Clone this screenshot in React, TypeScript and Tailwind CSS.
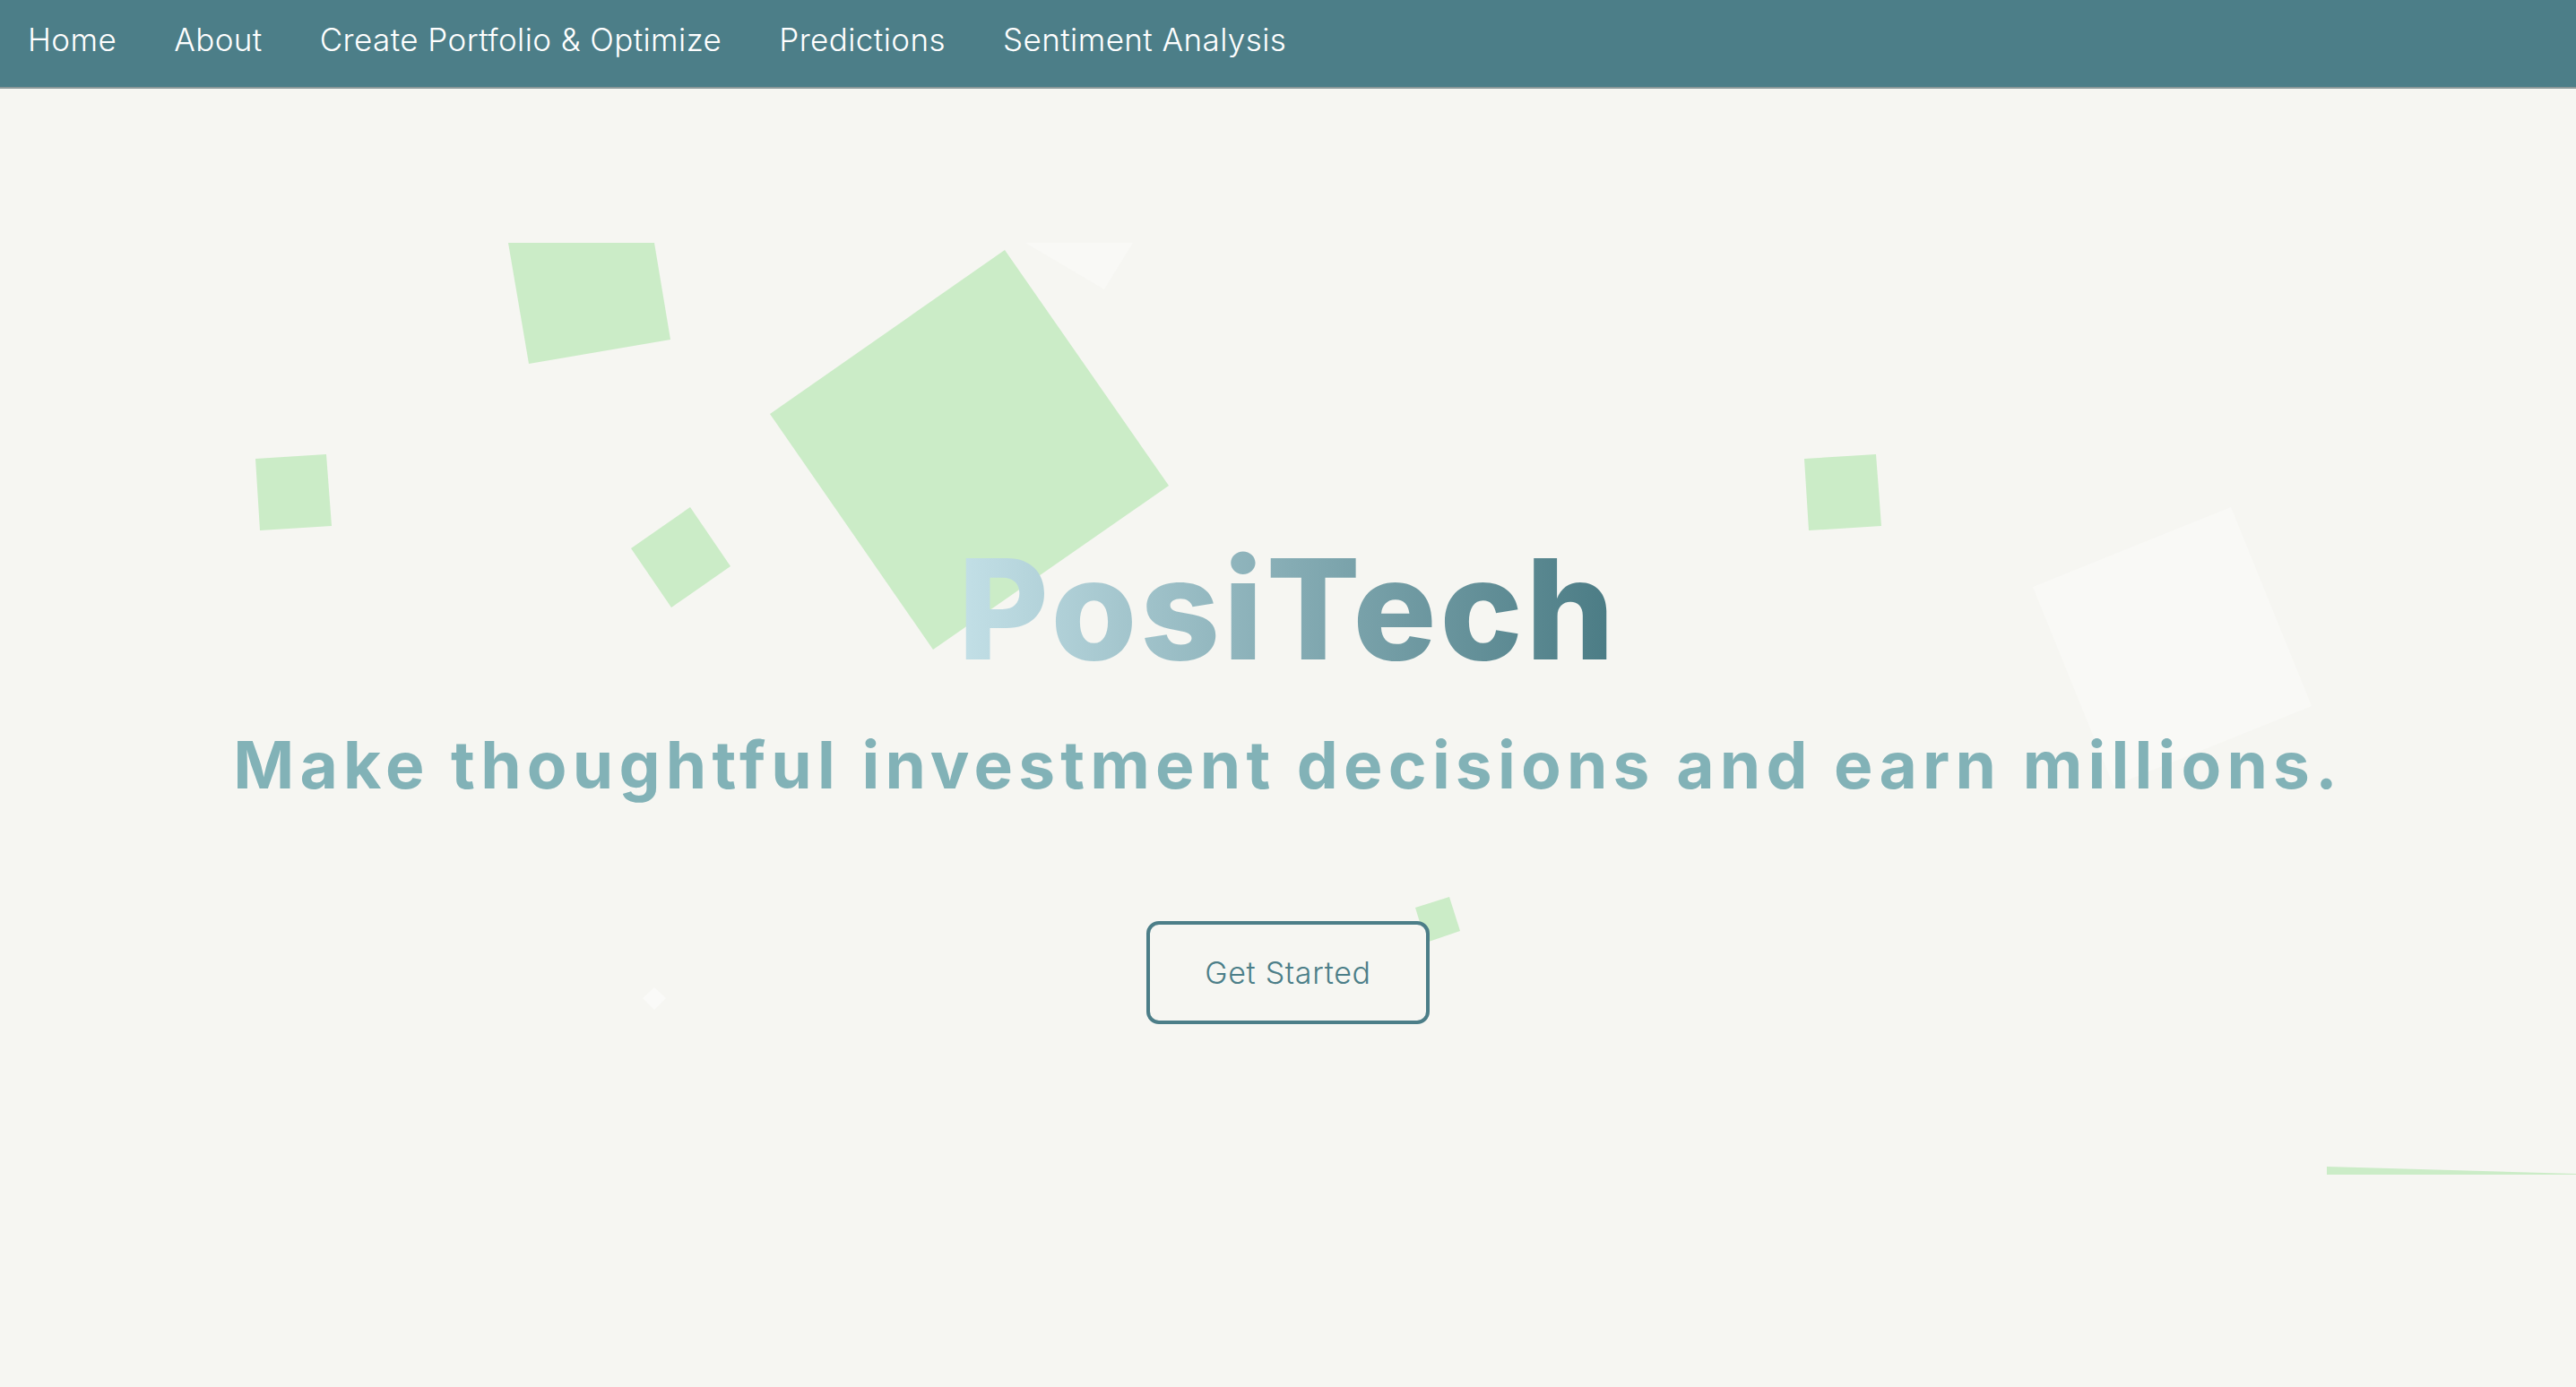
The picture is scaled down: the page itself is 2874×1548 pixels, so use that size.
import clsx from "clsx";

const links = ["Home", "About", "Create Portfolio & Optimize", "Predictions", "Sentiment Analysis"];

// background shapes, page coordinates
const shapes: Array<{ points: string; fill: string }> = [
  { points: "567,271 730,271 748,379 590,406", fill: "#cbecc7" },
  { points: "1121,279 1304,542 1041,725 859,462", fill: "#cbecc7" },
  { points: "285,512 364,507 370,587 290,592", fill: "#cbecc7" },
  { points: "770,566 815,632 749,678 704,612", fill: "#cbecc7" },
  { points: "2013,512 2093,507 2099,587 2018,592", fill: "#cbecc7" },
  { points: "1579,1013 1617,1001 1629,1039 1591,1052", fill: "#cbecc7" },
  { points: "2596,1302 2874,1310 2874,1311 2596,1311", fill: "#cbecc7" },
  { points: "1144,271 1264,271 1232,323", fill: "#f9f9f6" },
  { points: "2268,655 2489,566 2579,788 2358,877", fill: "#f9f9f6" },
  { points: "730,1102 743,1114 730,1127 717,1114", fill: "#fafaf8" },
];

function Shapes() {
  return (
    <svg className="absolute top-0 left-0 pointer-events-none" width={2874} height={1548} viewBox="0 0 2874 1548">
      {shapes.map((s, i) => (
        <polygon key={i} points={s.points} fill={s.fill} />
      ))}
    </svg>
  );
}

export default function App() {
  return (
    <div className="relative h-[1548px] w-full overflow-hidden bg-[#f6f6f2] font-['Inter',sans-serif]">
      <Shapes />
      <nav className="relative flex h-[99px] items-center border-b-2 border-[#8a9899] bg-[#4c7e88] pb-[8px]">
        {links.map((l, i) => (
          <a
            key={l}
            href="#"
            className={clsx("px-8 text-[35px] font-light tracking-[0.012em] text-white", i === 0 && "pl-[31px]")}
          >
            {l}
          </a>
        ))}
      </nav>
      <main className="relative flex flex-col items-center pt-[503px]">
        <h1 className="bg-gradient-to-r from-[#c3e0e7] to-[#4a7b84] bg-clip-text text-[155px] leading-none font-extrabold tracking-[0.025em] text-transparent">
          PosiTech
        </h1>
        <p className="mt-[60px] text-[73px] leading-none font-bold tracking-[0.085em] text-[#82b2b7]">
          Make thoughtful investment decisions and earn millions.
        </p>
        <button className="mt-[138px] h-[115px] w-[316px] rounded-[14px] border-4 border-[#4c7e88] bg-[#f6f6f2] text-[34px] font-light tracking-[0.02em] text-[#4c7e88]">
          Get Started
        </button>
      </main>
    </div>
  );
}
